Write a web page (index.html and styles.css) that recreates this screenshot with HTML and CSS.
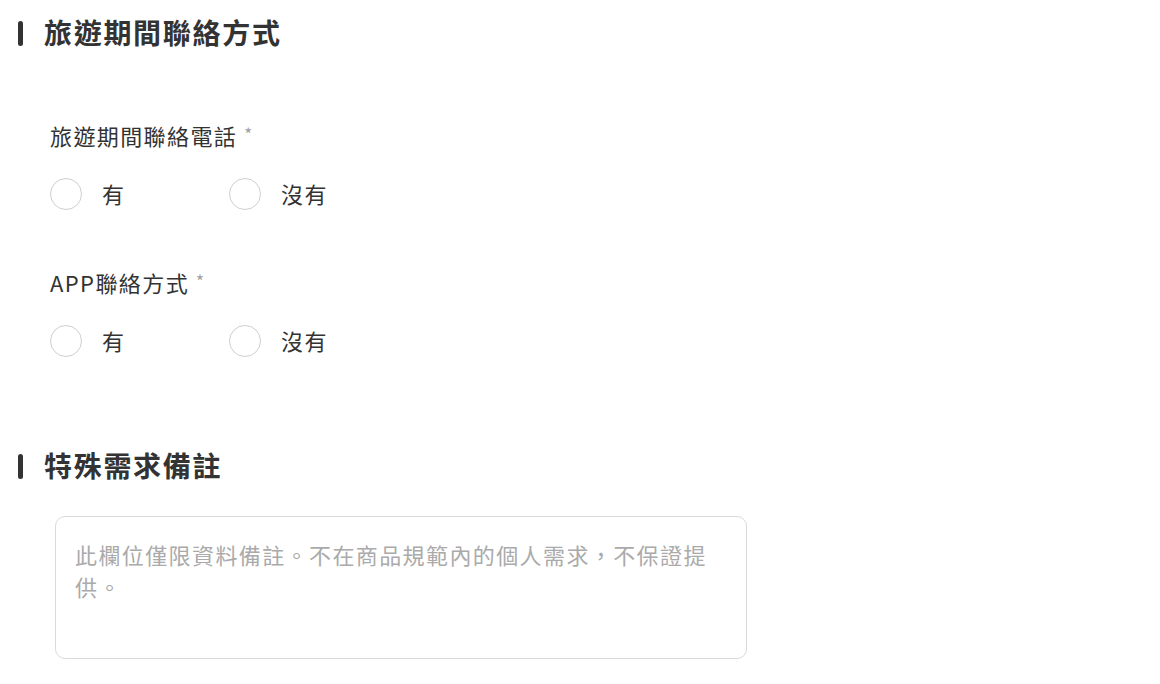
FILE: index.html
```html
<!DOCTYPE html>
<html lang="zh-Hant">
<head>
<meta charset="utf-8">
<title>旅遊期間聯絡方式</title>
<link rel="stylesheet" href="styles.css">
</head>
<body>
<div class="page">
  <h2 class="section-title">旅遊期間聯絡方式</h2>

  <div class="group group-first">
    <div class="label">旅遊期間聯絡電話<span class="req">*</span></div>
    <div class="options">
      <label class="option"><span class="radio"></span><span class="opt-text">有</span></label>
      <label class="option"><span class="radio"></span><span class="opt-text">沒有</span></label>
    </div>
  </div>

  <div class="group group-second">
    <div class="label">APP聯絡方式<span class="req">*</span></div>
    <div class="options">
      <label class="option"><span class="radio"></span><span class="opt-text">有</span></label>
      <label class="option"><span class="radio"></span><span class="opt-text">沒有</span></label>
    </div>
  </div>

  <h2 class="section-title section-second">特殊需求備註</h2>

  <div class="note-box">
    <div class="placeholder">此欄位僅限資料備註。不在商品規範內的個人需求，不保證提供。</div>
  </div>
</div>
</body>
</html>
```

FILE: styles.css
```css
html, body {
  margin: 0;
  padding: 0;
  background: #ffffff;
}

body {
  font-family: "Noto Sans CJK TC", "Noto Sans", sans-serif;
  color: #333333;
}

.page {
  padding: 12px 0 0 18px;
}

.section-title {
  margin: 0;
  display: flex;
  align-items: center;
  gap: 21px;
  font-size: 28px;
  font-weight: 700;
  line-height: 40px;
  letter-spacing: 1.7px;
  color: #333333;
}

.section-title::before {
  content: "";
  display: block;
  width: 5px;
  height: 25px;
  border-radius: 3px;
  background: #333333;
  margin-top: 2px;
}

.group {
  padding-left: 32px;
}

.group-first {
  margin-top: 68px;
}

.group-second {
  margin-top: 57px;
}

.label {
  font-size: 22px;
  line-height: 30px;
  letter-spacing: 1.4px;
  color: #333333;
}

.req {
  color: #a0a0a0;
  font-size: 17px;
  letter-spacing: 0;
  vertical-align: 4px;
  line-height: 1;
  margin-left: 7px;
}

.options {
  display: flex;
  margin-top: 28px;
}

.option {
  display: flex;
  align-items: center;
  gap: 20px;
  width: 179px;
  height: 32px;
}

.radio {
  box-sizing: border-box;
  width: 32px;
  height: 32px;
  border: 1px solid #cfcfcf;
  border-radius: 50%;
  background: #ffffff;
}

.opt-text {
  font-size: 22px;
  line-height: 30px;
  letter-spacing: 1.4px;
  color: #333333;
  margin-top: -2px;
}

.section-second {
  margin-top: 88px;
}

.note-box {
  box-sizing: border-box;
  margin: 31px 0 0 37px;
  width: 692px;
  height: 143px;
  border: 1px solid #dadada;
  border-radius: 10px;
  padding: 21px 26px 0 19px;
}

.placeholder {
  font-size: 22px;
  line-height: 32px;
  letter-spacing: 1.4px;
  color: #aaaaaa;
}
```
